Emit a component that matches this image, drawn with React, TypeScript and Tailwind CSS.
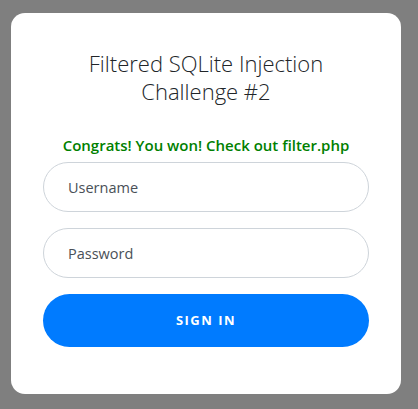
export default function App() {
  return (
    <div
      className="min-h-[409px] w-full bg-[#7f7f7f] pt-[13px] pl-[11px]"
      style={{ fontFamily: '"Open Sans", "Noto Sans", sans-serif' }}
    >
      <div className="w-[390px] h-[381px] rounded-[14px] bg-white px-[32px] pt-[36px]">
        <h1 className="text-center text-[22px] leading-[28px] font-light text-[#212529]">
          Filtered SQLite Injection
          <br />
          Challenge #2
        </h1>

        <p className="mt-[30px] text-center text-[15px] leading-[20px] font-semibold text-[#008000]">
          Congrats! You won! Check out filter.php
        </p>

        <form className="mt-[7px] flex flex-col gap-4">
          <input
            type="text"
            placeholder="Username"
            className="h-[50px] w-full rounded-full border border-[#ced4da] px-[24px] text-[14.5px] text-[#495057] placeholder:text-[#495057] outline-none"
          />
          <input
            type="password"
            placeholder="Password"
            className="h-[50px] w-full rounded-full border border-[#ced4da] px-[24px] text-[14.5px] text-[#495057] placeholder:text-[#495057] outline-none"
          />
          <button
            type="button"
            className="h-[53px] w-full rounded-full bg-[#007bff] text-[13px] font-bold tracking-[1.5px] text-white"
          >
            SIGN IN
          </button>
        </form>
      </div>
    </div>
  );
}
